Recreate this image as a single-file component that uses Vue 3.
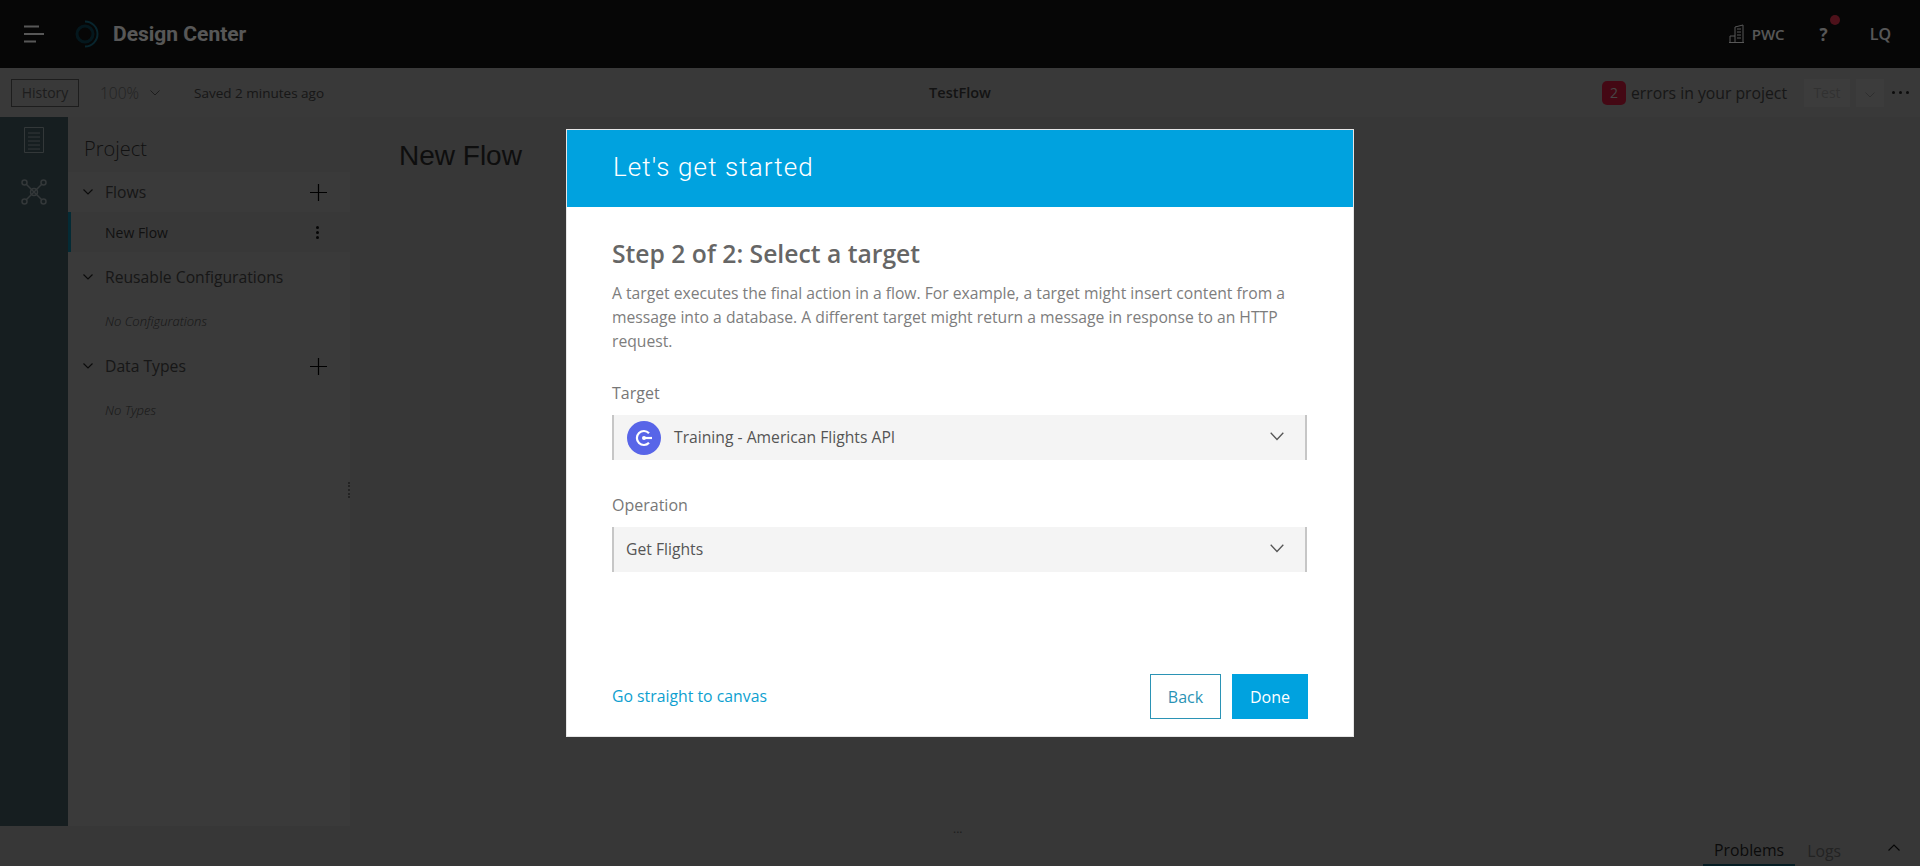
<template>
  <div class="app">
    <!-- top bar -->
    <header class="topbar">
      <svg class="burger" width="20" height="18" viewBox="0 0 20 18">
        <path d="M0 1.5h15M0 9h20M0 16.5h12" stroke="#fff" stroke-width="2" fill="none" />
      </svg>
      <svg class="logo" width="28" height="28" viewBox="0 0 28 28" fill="none">
        <circle cx="14" cy="14" r="8" stroke="#0a5f7a" stroke-width="3" />
        <path d="M14 1.5A12.5 12.5 0 0 1 14 26.5" stroke="#1d9fc4" stroke-width="2" />
      </svg>
      <span class="brand">Design Center</span>
      <div class="top-right">
        <svg width="15" height="20" viewBox="0 0 15 20" fill="none" stroke="#fff" stroke-width="1">
          <path d="M6 18V3l8-2v17M8 5h4M8 8h4M8 11h4M8 14h4M1 18v-6h5M0 18.500h15" />
        </svg>
        <span class="org">PWC</span>
        <span class="help">?<i class="help-dot"></i></span>
        <span class="user">LQ</span>
      </div>
    </header>

    <!-- toolbar -->
    <div class="toolbar">
      <div class="tool-left">
        <button class="history">History</button>
        <span class="zoom-val">100%</span>
        <svg class="tool-caret" width="10" height="6" viewBox="0 0 10 6"><path d="M.5.5 5 5 9.500.5" fill="none" stroke="#555" /></svg>
        <span class="saved">Saved 2 minutes ago</span>
      </div>
      <div class="flow-name">TestFlow</div>
      <div class="tool-right">
        <span class="err-badge">2</span>
        <span class="err-text">errors in your project</span>
        <button class="test">Test</button>
        <button class="test-caret">
          <svg width="10" height="6" viewBox="0 0 10 6"><path d="M.5.5 5 5 9.500.5" fill="none" stroke="#888" /></svg>
        </button>
        <span class="more"><i></i><i></i><i></i></span>
      </div>
    </div>

    <div class="main">
      <!-- icon rail -->
      <aside class="rail">
        <svg width="20" height="26" viewBox="0 0 20 26" fill="none" stroke="#fff" stroke-width="1">
          <path d="M.5.500h19v25H.5zM4 6h12M4 10h12M4 14h12M4 18h12M4 22h12" />
        </svg>
        <svg width="26" height="26" viewBox="0 0 26 26" fill="none" stroke="#fff" stroke-width="1.500">
          <path d="M5 5l16 16M21 5 5 21" />
          <circle cx="13" cy="13" r="3.500" />
          <circle cx="3.500" cy="3.500" r="2.500" />
          <circle cx="22.500" cy="3.500" r="2.500" />
          <circle cx="3.500" cy="22.500" r="2.500" />
          <circle cx="22.500" cy="22.500" r="2.500" />
        </svg>
      </aside>

      <!-- project tree -->
      <section class="project">
        <div class="project-title">Project</div>
        <template v-for="sec in sections" :key="sec.name">
          <div class="sec-row">
            <svg class="chev" width="10" height="6" viewBox="0 0 10 6"><path d="M.5.500 5 5 9.500.5" fill="none" stroke="#222" stroke-width="1.200" /></svg>
            <span class="sec-name">{{ sec.name }}</span>
            <svg v-if="sec.add" class="plus" width="17" height="17" viewBox="0 0 17 17"><path d="M8.500 0v17M0 8.500h17" stroke="#000" stroke-width="1.200" /></svg>
          </div>
          <div v-if="sec.item" class="item-row">
            <span>{{ sec.item }}</span>
            <span class="kebab"><i></i><i></i><i></i></span>
          </div>
          <div v-else class="empty-row">{{ sec.empty }}</div>
        </template>
        <span class="grip"></span>
      </section>

      <!-- canvas -->
      <section class="canvas">
        <h1 class="canvas-title">New Flow</h1>
      </section>
    </div>

    <!-- bottom strip -->
    <footer class="bottom">
      <span class="bottom-dots">...</span>
      <span class="tab active">Problems</span>
      <span class="tab">Logs</span>
      <svg class="bottom-caret" width="12" height="7" viewBox="0 0 12 7"><path d="M.5 6.500 6 1l5.500 5.500" fill="none" stroke="#111" stroke-width="1.200" /></svg>
    </footer>

    <!-- dialog -->
    <div class="overlay">
      <div class="dialog">
        <div class="dialog-head">Let's get started</div>
        <div class="dialog-body">
          <h2 class="step">Step 2 of 2: Select a target</h2>
          <p class="desc">A target executes the final action in a flow. For example, a target might insert content from a message into a database. A different target might return a message in response to an HTTP request.</p>

          <label class="field-label">Target</label>
          <div class="select">
            <span class="api-icon">
              <svg width="20" height="20" viewBox="0 0 20 20" fill="none" stroke="#fff" stroke-width="2.200">
                <path d="M15 5.200A7 7 0 1 0 15 14.800" />
                <circle cx="10" cy="10" r="2" fill="#fff" stroke="none" />
                <path d="M10 10h8" />
              </svg>
            </span>
            <span class="select-text">Training - American Flights API</span>
            <svg class="select-caret" width="14" height="9" viewBox="0 0 14 9"><path d="M.7.700 7 7.500 13.300.7" fill="none" stroke="#555" stroke-width="1.300" /></svg>
          </div>

          <label class="field-label second">Operation</label>
          <div class="select">
            <span class="select-text">Get Flights</span>
            <svg class="select-caret" width="14" height="9" viewBox="0 0 14 9"><path d="M.7.700 7 7.500 13.300.7" fill="none" stroke="#555" stroke-width="1.300" /></svg>
          </div>

          <div class="actions">
            <a class="skip">Go straight to canvas</a>
            <button class="btn-back">Back</button>
            <button class="btn-done">Done</button>
          </div>
        </div>
      </div>
    </div>
  </div>
</template>

<script setup>
const sections = [
  { name: 'Flows', add: true, item: 'New Flow' },
  { name: 'Reusable Configurations', empty: 'No Configurations' },
  { name: 'Data Types', add: true, empty: 'No Types' }
];
</script>

<style>
html, body { margin: 0; height: 100%; overflow: hidden; }
</style>

<style scoped>
.app {
  position: relative;
  width: 1920px;
  height: 866px;
  display: flex;
  flex-direction: column;
  overflow: hidden;
  background: #a0a0a0;
  font-family: "Open Sans", "Liberation Sans", sans-serif;
  color: #2a2a2a;
}
button { font-family: inherit; }

/* ===== top bar ===== */
.topbar {
  height: 68px;
  flex-shrink: 0;
  background: #121212;
  display: flex;
  align-items: center;
  padding-left: 24px;
  box-sizing: border-box;
}
.logo { margin-left: 27px; opacity: .65; }
.brand {
  margin-left: 14px;
  font-family: Roboto, sans-serif;
  font-weight: 700;
  font-size: 21px;
  color: #fff;
}
.top-right {
  margin-left: auto;
  display: flex;
  align-items: center;
  color: #fff;
  font-weight: 600;
  font-size: 15px;
  padding-right: 29px;
}
.org { margin-left: 8px; }
.help { position: relative; margin-left: 35px; font-size: 17px; font-weight: 700; }
.help-dot {
  position: absolute;
  top: -8px;
  left: 10px;
  width: 10px;
  height: 10px;
  border-radius: 50%;
  background: #e0344c;
}
.user { margin-left: 42px; font-size: 16px; }

/* ===== toolbar ===== */
.toolbar {
  height: 49px;
  flex-shrink: 0;
  display: grid;
  grid-template-columns: 1fr auto 1fr;
  align-items: center;
  background: #a6a6a6;
  padding: 0 11px 0 11px;
  box-sizing: border-box;
  font-size: 14px;
}
.tool-left, .tool-right { display: flex; align-items: center; }
.tool-right { justify-content: flex-end; }
.history {
  width: 68px;
  height: 28px;
  border: 1px solid #555;
  background: transparent;
  font-size: 14px;
  color: #555;
  padding: 0;
}
.zoom-val { margin-left: 21px; color: #666; font-weight: 300; font-size: 15.500px; }
.tool-caret { margin-left: 11px; }
.saved { margin-left: 34px; font-size: 13.500px; color: #444; }
.flow-name { font-weight: 600; font-size: 14.500px; color: #3a3a3a; }
.err-badge {
  width: 24px;
  height: 24px;
  border-radius: 5px;
  background: #c8193c;
  color: #ccc;
  font-size: 14px;
  text-align: center;
  line-height: 24px;
}
.err-text { margin-left: 5px; font-size: 15.750px; color: #444; }
.test {
  margin-left: 17px;
  width: 46px;
  height: 28px;
  border: 0;
  background: #b0b0b0;
  color: #909090;
  font-size: 14px;
  padding: 0;
}
.test-caret {
  margin-left: 6px;
  width: 28px;
  height: 28px;
  border: 0;
  background: #b0b0b0;
  padding: 0;
}
.more { margin-left: 8px; display: flex; gap: 4px; }
.more i { width: 3px; height: 3px; border-radius: 50%; background: #222; }

/* ===== main ===== */
.main { flex: 1; display: flex; min-height: 0; }
.rail {
  width: 68px;
  flex-shrink: 0;
  background: #41585f;
  display: flex;
  flex-direction: column;
  align-items: center;
  padding-top: 10px;
  gap: 26px;
  box-sizing: border-box;
}
.rail svg { opacity: .45; }
.project {
  position: relative;
  width: 282px;
  flex-shrink: 0;
  background: #a9a9a9;
  box-sizing: border-box;
}
.project-title {
  height: 55px;
  padding-left: 16px;
  line-height: 63px;
  font-size: 20px;
  font-weight: 300;
  color: #333;
  background: #a5a5a5;
  box-sizing: border-box;
}
.sec-row {
  height: 40px;
  display: flex;
  align-items: center;
  padding: 0 23px 0 15px;
}
.sec-name { margin-left: 12px; font-size: 15.700px; color: #444; }
.plus { margin-left: auto; }
.item-row {
  height: 40px;
  display: flex;
  align-items: center;
  padding: 0 29px 0 34px;
  background: #a3a3a3;
  border-left: 3px solid #0d7f9b;
  font-size: 14px;
  justify-content: space-between;
  color: #333;
}
.kebab { display: flex; flex-direction: column; gap: 2px; margin-right: 2px; }
.kebab i { width: 3px; height: 3px; border-radius: 50%; background: #111; }
.item-row + .sec-row { margin-top: 5px; }
.empty-row {
  height: 49px;
  display: flex;
  align-items: center;
  padding: 0 0 2px 37px;
  box-sizing: border-box;
  font-size: 13px;
  font-style: italic;
  font-weight: 300;
  color: #444;
}
.grip {
  position: absolute;
  right: -2px;
  top: 365px;
  width: 2px;
  height: 16px;
  border-left: 2px dotted #666;
}
.canvas { flex: 1; padding: 23px 0 0 49px; }
.canvas-title {
  margin: 0;
  font-family: "Liberation Sans", Arial, sans-serif;
  font-weight: 400;
  font-size: 28px;
  line-height: 32px;
  color: #2a2a2a;
}

/* ===== bottom ===== */
.bottom {
  position: relative;
  height: 40px;
  flex-shrink: 0;
  display: flex;
  align-items: center;
  justify-content: flex-end;
  background: #a2a2a2;
  box-sizing: border-box;
  padding-right: 20px;
  font-size: 15.800px;
}
.bottom-dots {
  position: absolute;
  left: 953px;
  top: -6px;
  font-size: 12px;
  color: #555;
}
.tab {
  height: 100%;
  display: flex;
  align-items: center;
  padding: 10px 11px 0;
  box-sizing: border-box;
  color: #666;
}
.tab.active { color: #222; border-bottom: 2px solid #14566b; margin-right: 1px; }
.bottom-caret { margin-left: 36px; margin-top: 2px; }

/* ===== dialog ===== */
.overlay {
  position: absolute;
  inset: 0;
  background: rgba(0, 0, 0, .66);
}
.dialog {
  position: absolute;
  left: 566px;
  top: 129px;
  width: 788px;
  height: 608px;
  background: #fff;
  border: 1px solid #e6e6e6;
  box-sizing: border-box;
  display: flex;
  flex-direction: column;
}
.dialog-head {
  height: 77px;
  flex-shrink: 0;
  background: #00a2df;
  color: #fff;
  padding-left: 46px;
  line-height: 74px;
  font-family: Roboto, sans-serif;
  font-weight: 300;
  font-size: 26px;
  letter-spacing: 1.100px;
}
.dialog-body {
  flex: 1;
  padding: 31px 45px 17px;
  display: flex;
  flex-direction: column;
  color: #6b6b6b;
}
.step {
  margin: 0;
  font-size: 24.700px;
  line-height: 32px;
  font-weight: 600;
  color: #666;
}
.desc {
  margin: 11px 0 0;
  font-size: 15.700px;
  line-height: 24px;
  color: #7d7d7d;
  width: 690px;
}
.field-label {
  margin-top: 28px;
  font-size: 16px;
  line-height: 24px;
  color: #777;
}
.field-label.second { margin-top: 33px; }
.select {
  margin-top: 10px;
  height: 45px;
  width: 695px;
  box-sizing: border-box;
  background: #f4f4f4;
  border-left: 2px solid #c6c6c6;
  border-right: 2px solid #c6c6c6;
  display: flex;
  align-items: center;
  padding: 0 21px 0 12px;
}
.api-icon {
  width: 34px;
  height: 34px;
  border-radius: 50%;
  background: #5865e8;
  display: flex;
  align-items: center;
  justify-content: center;
  margin: 0 13px 0 1px;
}
.select-text { font-size: 15.700px; color: #555; margin-top: -1px; }
.select-caret { margin-left: auto; margin-top: -2px; }
.actions {
  margin-top: auto;
  display: flex;
  align-items: center;
  width: 696px;
}
.skip { color: #0e9fd0; font-size: 15.800px; margin-right: auto; margin-top: -2px; }
.btn-back, .btn-done {
  height: 45px;
  font-size: 16px;
  padding: 0;
  box-sizing: border-box;
}
.btn-back {
  width: 71px;
  background: #fff;
  border: 1px solid #2b93b5;
  color: #2b93b5;
  margin-right: 11px;
}
.btn-done {
  width: 76px;
  background: #00a2df;
  border: 0;
  color: #fff;
}
</style>
